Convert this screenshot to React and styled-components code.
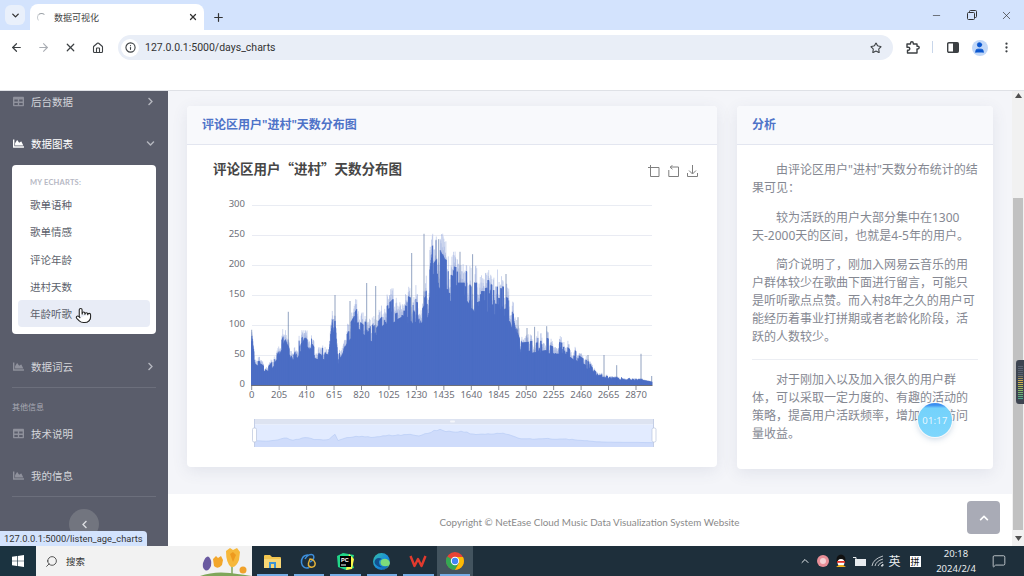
import React from "react";
import styled, { createGlobalStyle } from "styled-components";
import {
  ArrowLeft,
  ArrowRight,
  ChevronDown,
  ChevronUp,
  EllipsisVertical,
  House,
  Info,
  Minus,
  MessageSquare,
  Plus,
  Pointer,
  Search,
  Star,
  User,
  X,
} from "lucide-react";
import {
  FaChartArea,
  FaChevronDown,
  FaChevronLeft,
  FaChevronRight,
  FaChevronUp,
  FaTable,
} from "react-icons/fa";

const SANS = `"Noto Sans", "Noto Sans CJK SC", sans-serif`;
const BAR = "#4a6cc4";

const GlobalStyle = createGlobalStyle`
  html, body { margin: 0; padding: 0; background: #fff; overflow: hidden; }
  * { box-sizing: border-box; }
  body { font-family: ${SANS}; }
`;

const Screen = styled.div`
  width: 1024px;
  height: 576px;
  display: flex;
  flex-direction: column;
  overflow: hidden;
`;

/* browser chrome */
const TabStrip = styled.div`
  height: 30px;
  flex: none;
  background: #d3e3fd;
  display: flex;
  align-items: flex-end;
  padding-left: 5px;
`;
const TabList = styled.div`
  width: 20px;
  height: 20px;
  margin-bottom: 5px;
  border-radius: 6px;
  background: #e9f0fb;
  display: flex;
  align-items: center;
  justify-content: center;
  color: #333;
`;
const Tab = styled.div`
  width: 174px;
  height: 26px;
  margin-left: 5px;
  padding: 0 6px 0 7px;
  background: #fff;
  border-radius: 8px 8px 0 0;
  display: flex;
  align-items: center;
  color: #444;
  font-size: 9px;
`;
const Spinner = styled.span`
  width: 9px;
  height: 9px;
  margin-right: 8px;
  border-radius: 50%;
  border: 1px solid transparent;
  border-top-color: #9aa0a6;
  border-left-color: #c6cacf;
  flex: none;
`;
const TabTitle = styled.span`
  flex: 1;
`;
const NewTab = styled.div`
  width: 28px;
  height: 25px;
  color: #333;
  display: flex;
  align-items: center;
  justify-content: center;
`;
const WindowButtons = styled.div`
  margin-left: auto;
  height: 30px;
  display: flex;
  color: #333;
`;
const WindowButton = styled.div`
  width: 35px;
  display: flex;
  align-items: center;
  justify-content: center;
`;

const Toolbar = styled.div`
  height: 30px;
  flex: none;
  background: #fff;
  border-radius: 8px 8px 0 0;
  display: flex;
  align-items: flex-start;
  padding: 5px 0 0 3px;
`;
const ToolCell = styled.div`
  width: 27px;
  height: 25px;
  flex: none;
  display: flex;
  align-items: center;
  justify-content: center;
  color: ${(p) => (p.$dim ? "#a9adb3" : "#3c4043")};
`;
const UrlBar = styled.div`
  width: 775px;
  height: 25px;
  margin: 0 6px 0 7px;
  border-radius: 13px;
  background: #e9eef7;
  display: flex;
  align-items: center;
  padding: 0 11px 0 3px;
  color: #3c4043;
  flex: none;
`;
const InfoDot = styled.div`
  width: 18px;
  height: 18px;
  border-radius: 50%;
  background: #fff;
  display: flex;
  align-items: center;
  justify-content: center;
  margin-right: 6px;
`;
const UrlText = styled.span`
  flex: 1;
  font-family: "Roboto", sans-serif;
  font-size: 10.5px;
  color: #333;
`;
const ToolDivider = styled.div`
  width: 1px;
  height: 12px;
  margin: 6px;
  background: #c8d6ea;
`;
const Avatar = styled.div`
  width: 16px;
  height: 16px;
  border-radius: 50%;
  background: #c2d8f8;
  color: #0b57d0;
  display: flex;
  align-items: center;
  justify-content: center;
  overflow: hidden;
`;

const SiteHeader = styled.div`
  height: 31px;
  flex: none;
  background: #fff;
  border-bottom: 1px solid #dfe1e6;
`;

/* page */
const PageRow = styled.div`
  position: relative;
  flex: 1;
  min-height: 0;
  display: flex;
`;
const Sidebar = styled.nav`
  width: 168px;
  flex: none;
  background: #5a5d6b;
  overflow: hidden;
  padding: 0 12px;
`;
const NavRow = styled.div`
  height: 42px;
  display: flex;
  align-items: center;
  font-size: 10.5px;
  color: ${(p) => (p.$active ? "#fff" : "#d4d5da")};
  margin-top: ${(p) => (p.$first ? "-11px" : "0")};
`;
const NavIcon = styled.span`
  width: 18px;
  margin-left: 1px;
  display: flex;
  color: ${(p) => (p.$active ? "#fff" : "#8f919c")};
  flex: none;
`;
const NavLabel = styled.span`
  flex: 1;
`;
const NavArrow = styled.span`
  width: 10px;
  margin-right: 1px;
  display: flex;
  justify-content: center;
  color: #b4b6be;
`;
const SubMenu = styled.div`
  height: 169px;
  margin: 1px 0 11px;
  background: #fff;
  border-radius: 4px;
  padding: 12px 6px 0;
`;
const SubHeading = styled.div`
  height: 12px;
  padding-left: 12px;
  font-family: "Lato", sans-serif;
  font-weight: 700;
  font-size: 7.5px;
  line-height: 12px;
  color: #b6b8c4;
  margin-bottom: 2px;
  letter-spacing: 0.2px;
`;
const SubItem = styled.div`
  position: relative;
  height: 27.25px;
  padding-left: 12px;
  display: flex;
  align-items: center;
  font-size: 10.5px;
  color: #5c5f6b;
  border-radius: 4px;
  background: ${(p) => (p.$hover ? "#e8ecf6" : "transparent")};
`;
const Cursor = styled.span`
  position: absolute;
  left: 57px;
  top: 7px;
  color: #222;
  display: flex;
`;
const NavDivider = styled.div`
  height: 1px;
  background: #6c6f7c;
`;
const NavGroup = styled.div`
  height: 24px;
  padding-top: 13px;
  font-size: 8px;
  line-height: 11px;
  color: #a8aab4;
`;
const Collapse = styled.div`
  width: 30px;
  height: 30px;
  margin: 12px auto 0;
  border-radius: 50%;
  background: #72757f;
  color: #dcdde1;
  display: flex;
  align-items: center;
  justify-content: center;
`;

const Main = styled.main`
  flex: 1;
  min-width: 0;
  display: flex;
  flex-direction: column;
`;
const Content = styled.div`
  height: 403px;
  flex: none;
  background: #f4f5f9;
  padding: 15px 19px 0;
  display: flex;
  align-items: flex-start;
  gap: 20px;
`;
const Card = styled.section`
  width: ${(p) => p.$w}px;
  height: ${(p) => p.$h}px;
  flex: none;
  background: #fff;
  border-radius: 4px;
  box-shadow: 0 4px 16px rgba(70, 80, 120, 0.1);
  overflow: hidden;
`;
const CardHead = styled.header`
  height: 39px;
  background: #f8f9fc;
  border-bottom: 1px solid #e3e6f0;
  padding: 0 0 2px 15px;
  display: flex;
  align-items: center;
  font-size: 12px;
  font-weight: 600;
  color: #4e73c8;
`;
const ChartHead = styled.div`
  height: 50px;
  display: flex;
  align-items: center;
  padding: 1px 19px 0 26px;
`;
const ChartTitle = styled.h2`
  margin: 0 0 3px;
  flex: 1;
  font-family: "Noto Sans CJK SC", sans-serif;
  font-size: 13.5px;
  line-height: 1;
  font-weight: 700;
  color: #464646;
`;
const ChartTools = styled.div`
  display: flex;
  gap: 8px;
  color: #7f7f7f;
`;
const ChartSvg = styled.svg`
  display: block;
  width: 530px;
  height: 272px;
`;
const Analysis = styled.div`
  padding: 16px 15px 0;
  font-size: 12px;
  line-height: 18px;
  color: #858892;
`;
const Para = styled.p`
  margin: 0 0 11.5px;
  text-indent: 24px;
`;
const Rule = styled.hr`
  margin: 13px 0 11px;
  border: none;
  height: 1px;
  background: #eceef3;
`;

const Footer = styled.footer`
  flex: 1;
  background: #fff;
  padding: 7px 12px 0 0;
  display: flex;
  align-items: center;
`;
const Copyright = styled.div`
  flex: 1;
  text-align: center;
  font-family: "Lato", sans-serif;
  font-size: 9.85px;
  color: #8a8a8a;
  margin: 0 -44px 4px 0;
`;
const ToTop = styled.div`
  width: 33px;
  height: 33px;
  margin-bottom: 12px;
  border-radius: 4px;
  background: #a9abb6;
  color: #fff;
  display: flex;
  align-items: center;
  justify-content: center;
`;

const Scrollbar = styled.div`
  width: 12px;
  flex: none;
  background: #f1f1f1;
  display: flex;
  flex-direction: column;
  align-items: center;
  padding-top: 2px;
  color: #505050;
`;
const Thumb = styled.div`
  width: 10px;
  height: 332px;
  margin: 100px 0 6px;
  background: #c1c1c1;
`;
const RecMeter = styled.div`
  position: absolute;
  right: 0;
  top: 269px;
  width: 8px;
  height: 44px;
  border-radius: 3px 0 0 3px;
  background: #3d4450;
  padding: 6px 1px 4px 2px;
`;
const RecBars = styled.div`
  height: 100%;
  background: repeating-linear-gradient(
      to bottom,
      transparent 0 1px,
      #3d4450 1px 2px
    ),
    linear-gradient(to bottom, #5b6472 0 25%, #d8b44a 45%, #8dbb62 70%, #3fa98f 100%);
`;
const TimerBubble = styled.div`
  position: absolute;
  left: 918px;
  top: 312px;
  width: 34px;
  height: 34px;
  border-radius: 50%;
  background: linear-gradient(to bottom, #3b8ff0 0 6%, #74d2fb 15%, #7ed6fc 100%);
  box-shadow: 0 0 0 1px rgba(255, 255, 255, 0.75), 0 2px 6px rgba(90, 130, 170, 0.35);
  color: rgba(255, 255, 255, 0.85);
  font-size: 9.5px;
  letter-spacing: 0.2px;
  display: flex;
  align-items: center;
  justify-content: center;
`;
const LinkTip = styled.div`
  position: absolute;
  left: 0;
  bottom: 0;
  width: 147px;
  height: 15px;
  padding-left: 4px;
  background: #d3e3fd;
  border-radius: 0 4px 0 0;
  font-family: "Roboto", sans-serif;
  font-size: 9.35px;
  line-height: 15px;
  color: #333;
  white-space: nowrap;
`;

/* windows taskbar */
const Taskbar = styled.div`
  height: 30px;
  flex: none;
  background: #1e2f3b;
  display: flex;
  align-items: stretch;
`;
const StartButton = styled.div`
  width: 36px;
  display: flex;
  align-items: center;
  justify-content: center;
  background: #1b3340;
`;
const SearchBox = styled.div`
  width: 216px;
  margin-right: 2px;
  background: #f2f2f2;
  display: flex;
  align-items: center;
  padding-left: 9px;
  color: #333;
  font-size: 9.5px;
  overflow: hidden;
`;
const SearchGlass = styled(Search)`
  transform: scaleX(-1);
`;
const SearchLabel = styled.span`
  margin-left: 8px;
  flex: 1;
`;
const AppCell = styled.div`
  position: relative;
  width: 36.5px;
  display: flex;
  align-items: center;
  justify-content: center;
  background: ${(p) => (p.$active ? "#43545f" : "transparent")};
  &::after {
    content: "";
    position: absolute;
    left: 3px;
    right: 3px;
    bottom: 0;
    height: 2px;
    background: #76aee6;
  }
`;
const Tray = styled.div`
  margin-left: auto;
  display: flex;
  color: #e8ecef;
`;
const TrayCell = styled.div`
  width: ${(p) => p.$w}px;
  display: flex;
  align-items: center;
  justify-content: center;
  font-size: ${(p) => (p.$big ? 12 : 9.5)}px;
`;
const ImeBox = styled.span`
  width: 11px;
  height: 11px;
  background: #fff;
  color: #111;
  font-size: 9px;
  line-height: 11px;
  text-align: center;
`;
const Clock = styled.div`
  width: 58px;
  display: flex;
  flex-direction: column;
  align-items: center;
  justify-content: center;
  font-size: 9.5px;
  line-height: 15px;
  color: #e8ecef;
`;

/* chart data, read off the picture in screen pixels */
const ENVELOPE = [
  [251, 92], [255, 47], [268, 28], [277, 55], [285, 92], [293, 47], [305, 95],
  [315, 65], [328, 55], [335, 145], [338, 47], [348, 95], [358, 125], [372, 100],
  [385, 130], [402, 150], [418, 135], [428, 167], [432, 220], [438, 235], [445, 205],
  [455, 195], [465, 195], [475, 165], [490, 170], [500, 165], [510, 155], [516, 100],
  [522, 70], [530, 72], [546, 78], [556, 70], [567, 70], [578, 50], [588, 38],
  [597, 20], [610, 14], [625, 12], [640, 10], [652, 6],
];
const SPIKES = [
  [251.7, 92], [288.3, 122], [335, 150], [350, 140], [366.7, 170], [375.7, 165],
  [411.7, 220], [424, 252], [436, 242], [438.7, 243], [460, 222], [472.6, 218],
  [506, 185], [518, 113], [527, 95], [534.6, 97], [546.7, 98], [588, 50], [604, 50],
  [616.7, 33], [641, 52], [651.7, 15],
];
const BASE = 385;
const toY = (v) => BASE - (v * 180) / 300;

const envelopeAt = (x) => {
  for (let i = 1; i < ENVELOPE.length; i++) {
    const [x0, v0] = ENVELOPE[i - 1];
    const [x1, v1] = ENVELOPE[i];
    if (x <= x1) return v0 + ((v1 - v0) * (x - x0)) / (x1 - x0);
  }
  return 6;
};

let seed = 11;
const rand = () => {
  seed = (seed * 16807) % 2147483647;
  return seed / 2147483647;
};

const makeBars = () => {
  let body = "";
  let soft = "";
  let jag = 0.9;
  for (let x = 251.5; x <= 652; x += 0.4) {
    const v = envelopeAt(x);
    // hold a level for a couple of pixels so the outline looks jagged
    if (rand() < 0.3) jag = 0.68 + 0.37 * rand();
    body += `M${x.toFixed(1)} ${BASE}V${toY(v * jag).toFixed(1)}`;
    soft += `M${x.toFixed(1)} ${BASE}V${toY(v * (jag + 0.18 * rand())).toFixed(1)}`;
  }
  const spikes = SPIKES.map(([x, v]) => `M${x} ${BASE}V${toY(v)}`).join("");
  return { body, soft, spikes };
};
const BARS = makeBars();

const miniY = (v) => 443 - v * 0.058;
const makeMini = () => {
  const pts = [];
  for (let x = 254; x <= 653; x += 3) {
    const wob = 0.86 + 0.2 * rand();
    pts.push(`${x} ${miniY(envelopeAt(x) * wob).toFixed(1)}`);
  }
  const line = `M${pts.join("L")}`;
  return { line, area: `${line}L653 447L254 447Z` };
};
const MINI = makeMini();

const Y_TICKS = [0, 50, 100, 150, 200, 250, 300];
const X_TICKS = Array.from({ length: 15 }, (_, i) => i * 205);
const tickX = (i) => 251.7 + i * 27.45;

const CropIcon = () => (
  <svg width="12" height="12" viewBox="0 0 12 12" fill="none" stroke="currentColor" strokeWidth="1">
    <path d="M0 2.5H11V11.5H2.5V0" />
  </svg>
);
const RestoreIcon = () => (
  <svg width="11" height="12" viewBox="0 0 11 12" fill="none" stroke="currentColor" strokeWidth="1">
    <path d="M3 2H10.5V11.5H.8V5" />
    <path d="M4.5 .3L2 2.2L4.5 4.2" />
  </svg>
);
const SaveIcon = () => (
  <svg width="11" height="12" viewBox="0 0 11 12" fill="none" stroke="currentColor" strokeWidth="1">
    <path d="M.5 8V11.5H10.5V8" />
    <path d="M5.5 0V8.5M2 5.5L5.5 9L9 5.5" />
  </svg>
);

const Chart = () => (
  <ChartSvg viewBox="187 195 530 272" fontFamily={SANS}>
    {Y_TICKS.filter((v) => v > 0).map((v) => (
      <line key={v} x1="252" x2="652" y1={toY(v) + 0.5} y2={toY(v) + 0.5} stroke="#e9ecf3" />
    ))}
    {Y_TICKS.map((v) => (
      <text key={v} x="245" y={toY(v) + 2} fontSize="9.5" textAnchor="end" fill="#6e7079">
        {v}
      </text>
    ))}
    <path d={BARS.spikes} stroke="#55709f" strokeWidth="0.8" opacity="0.8" />
    <path d={BARS.soft} stroke={BAR} strokeWidth="0.5" opacity="0.55" />
    <path d={BARS.body} stroke={BAR} strokeWidth="0.9" />
    <line x1="251" x2="652.5" y1="385.5" y2="385.5" stroke="#6e7079" />
    {X_TICKS.map((v, i) => (
      <g key={v}>
        <line x1={tickX(i)} x2={tickX(i)} y1="385" y2="390" stroke="#6e7079" strokeWidth="0.8" />
        <text x={tickX(i)} y="397.5" fontSize="9.5" textAnchor="middle" fill="#6e7079">
          {v}
        </text>
      </g>
    ))}
    <rect x="254" y="419" width="400" height="5.5" fill="#dde3f1" />
    <rect x="254" y="424.5" width="400" height="22.5" fill="#e2ebff" />
    <path d={MINI.area} fill="#cfdcfb" />
    <path d={MINI.line} fill="none" stroke="#bccff6" strokeWidth="0.8" />
    <line x1="254.5" x2="254.5" y1="419" y2="447" stroke="#c4cee6" />
    <line x1="653.5" x2="653.5" y1="419" y2="447" stroke="#c4cee6" />
    <rect x="252.5" y="428" width="4" height="14" rx="1.5" fill="#fff" stroke="#b9c4dc" strokeWidth="0.7" />
    <rect x="652" y="428" width="4" height="14" rx="1.5" fill="#fff" stroke="#b9c4dc" strokeWidth="0.7" />
    <rect x="450" y="420.5" width="5" height="2" rx="1" fill="#f3f5fa" />
  </ChartSvg>
);

const PuzzleIcon = () => (
  <svg width="14" height="13" viewBox="0 0 14 13" fill="none" stroke="#3c4043" strokeWidth="1.4" strokeLinejoin="round">
    <path d="M1 3H4.5V2.2A1.4 1.4 0 0 1 7.3 2.2V3H11V5.2H11.8A1.4 1.4 0 0 1 11.8 8H11V12H1.5V9.2H2.3A1.4 1.4 0 0 0 2.3 6.2H1Z" />
  </svg>
);
const SidePanelIcon = () => (
  <svg width="12" height="11" viewBox="0 0 12 11">
    <rect x="0.7" y="0.7" width="10.6" height="9.6" rx="1.2" fill="#fff" stroke="#3c4043" strokeWidth="1.4" />
    <rect x="6" y="0.7" width="5.3" height="9.6" fill="#3c4043" />
  </svg>
);
const RestoreWindowIcon = () => (
  <svg width="10" height="10" viewBox="0 0 10 10" fill="none" stroke="currentColor" strokeWidth="1">
    <rect x="0.5" y="2.5" width="7" height="7" rx="1" />
    <path d="M2.5 2.5V1.5Q2.5 .5 3.5 .5H8.5Q9.5 .5 9.5 1.5V6.5Q9.5 7.5 8.5 7.5H7.5" />
  </svg>
);
const WindowsLogo = () => (
  <svg width="12" height="12" viewBox="0 0 12 12" fill="#fff">
    <path d="M0 1.7L5 1V5.7H0ZM5.7 .9L12 0V5.7H5.7ZM0 6.3H5V11L0 10.3ZM5.7 6.3H12V12L5.7 11.1Z" />
  </svg>
);
const Flowers = () => (
  <svg width="52" height="30" viewBox="0 0 52 30">
    <path d="M0 30Q14 25 30 27T52 30Z" fill="#7fa65a" />
    <path d="M3 17Q6 9 9 11Q12 14 11 20Q8 26 5 24Q2 22 3 17Z" fill="#6a5aa0" />
    <path d="M13 13L16 10L18 12L21 10L23 14L22 19Q18 24 14 20Z" fill="#f2a62b" />
    <path d="M26 5L30 2L33 4L37 2L40 6L39 14Q36 22 31 21Q26 17 26 5Z" fill="#f6b83a" />
    <path d="M30 8L33 6L36 9L33 16Z" fill="#ee9a1f" />
    <path d="M32 21V28" stroke="#7fa65a" strokeWidth="1.5" />
    <circle cx="43" cy="24" r="3.5" fill="#f0a22c" />
  </svg>
);
const FolderApp = () => (
  <svg width="17" height="15" viewBox="0 0 17 15">
    <path d="M0 2Q0 1 1 1H6L8 3H16Q17 3 17 4V14H0Z" fill="#f3c64f" />
    <rect x="0" y="5" width="17" height="9" fill="#f8d775" />
    <rect x="5" y="8" width="7" height="6" fill="#3d95d6" />
    <rect x="7" y="10" width="3" height="4" fill="#f8d775" />
  </svg>
);
const RingsApp = () => (
  <svg width="17" height="17" viewBox="0 0 17 17" fill="none" strokeWidth="1.5">
    <path d="M8 2C3 2 1 6 1.5 10C2 14 6 16 9 14.5" stroke="#3d8fdc" />
    <path d="M5 6C7 2 11 .5 13 2C15 4 13 8 10 9" stroke="#3d8fdc" />
    <path d="M10 6C13 6 16 9 15 12C14 15 10 15 8.5 12.5C8 10 9 8 10 6Z" stroke="#e4b33a" />
  </svg>
);
const PyCharmApp = () => (
  <svg width="17" height="17" viewBox="0 0 17 17">
    <path d="M0 3L6 0L17 2L15 9L17 15L9 17L1 14Z" fill="#21d789" />
    <path d="M12 1L17 6L15 16L9 17Z" fill="#fcf84a" />
    <rect x="3" y="3" width="11" height="11" fill="#000" />
    <text x="4" y="9" fontSize="5.5" fontWeight="700" fill="#fff" fontFamily="Liberation Sans, sans-serif">PC</text>
    <rect x="4" y="11.5" width="5" height="1" fill="#fff" />
  </svg>
);
const EdgeApp = () => (
  <svg width="17" height="17" viewBox="0 0 17 17">
    <defs>
      <linearGradient id="edgeFill" x1="0" y1="0" x2="1" y2="1">
        <stop offset="0" stopColor="#35c1a5" />
        <stop offset="0.55" stopColor="#1a8ddb" />
        <stop offset="1" stopColor="#0f5ea8" />
      </linearGradient>
    </defs>
    <circle cx="8.5" cy="8.5" r="8.5" fill="url(#edgeFill)" />
    <path d="M17 10C16 6 12 5 9 6.5C7 8 7 11 9 12.5C11 13.5 14 13.3 15.5 12.5C14 15.5 11 17 8.5 17C11 17 16 15 17 10Z" fill="#7ddc7a" />
    <path d="M6 9C6 12 8 14 11 14C7 15 2 13 1.5 9C2 5 6 4 9 6C7 6.5 6 7.5 6 9Z" fill="#12518f" />
  </svg>
);
const WpsApp = () => (
  <svg width="18" height="14" viewBox="0 0 18 14" fill="none" stroke="#e23a2e" strokeWidth="2.4" strokeLinejoin="round">
    <path d="M1.5 2L5.5 12L9 5L12.5 12L16.5 2" />
  </svg>
);
const ChromeApp = () => (
  <svg width="18" height="18" viewBox="0 0 18 18">
    <circle cx="9" cy="9" r="9" fill="#ea4335" />
    <path d="M9 9L1.2 4.5A9 9 0 0 0 9 18L13 11Z" fill="#34a853" />
    <path d="M9 5H17A9 9 0 0 1 9 18L13 11Z" fill="#fbbc04" />
    <circle cx="9" cy="9" r="4.2" fill="#fff" />
    <circle cx="9" cy="9" r="3.2" fill="#4285f4" />
  </svg>
);
const SakuraTray = () => (
  <svg width="12" height="12" viewBox="0 0 12 12">
    <circle cx="6" cy="6" r="6" fill="#e98f98" />
    <circle cx="6" cy="6" r="3" fill="#f6d3d6" />
  </svg>
);
const QqTray = () => (
  <svg width="12" height="14" viewBox="0 0 12 14">
    <ellipse cx="6" cy="6" rx="4.5" ry="5.5" fill="#111" />
    <ellipse cx="6" cy="8.5" rx="3.5" ry="3.5" fill="#fff" />
    <rect x="2" y="7" width="8" height="1.8" fill="#e3352b" />
    <path d="M1 13L4 11H8L11 13Z" fill="#f2b01e" />
  </svg>
);
const BatteryTray = () => (
  <svg width="15" height="11" viewBox="0 0 15 11" fill="none" stroke="#e8ecef">
    <rect x="3.5" y="3.5" width="10" height="6" fill="#e8ecef" />
    <path d="M1 1.5H4V4" />
  </svg>
);
const WifiTray = () => (
  <svg width="13" height="12" viewBox="0 0 13 12" fill="none" stroke="#cfd4d8" strokeWidth="0.9">
    <path d="M1 11Q2 4 12 1M4 11Q5 6 12 4M7 11Q8 8 12 7" />
    <path d="M10 11L12 9V11Z" fill="#cfd4d8" />
  </svg>
);

const SUB_ITEMS = ["歌单语种", "歌单情感", "评论年龄", "进村天数", "年龄听歌"];
const TRAY = [
  [18, <ChevronUp key="up" size={12} />],
  [17, <SakuraTray key="s" />],
  [19, <QqTray key="q" />],
  [19, <BatteryTray key="b" />],
  [17, <WifiTray key="w" />],
];
const APPS = [
  <FolderApp key="f" />,
  <RingsApp key="r" />,
  <PyCharmApp key="p" />,
  <EdgeApp key="e" />,
  <WpsApp key="w" />,
];

const App = () => {
  return (
    <Screen>
      <GlobalStyle />
      <TabStrip>
        <TabList>
          <ChevronDown size={11} strokeWidth={3} />
        </TabList>
        <Tab>
          <Spinner />
          <TabTitle>数据可视化</TabTitle>
          <X size={10} strokeWidth={3} color="#333" />
        </Tab>
        <NewTab>
          <Plus size={13} strokeWidth={2.2} />
        </NewTab>
        <WindowButtons>
          <WindowButton>
            <Minus size={11} strokeWidth={1.4} />
          </WindowButton>
          <WindowButton>
            <RestoreWindowIcon />
          </WindowButton>
          <WindowButton>
            <X size={13} strokeWidth={1.3} />
          </WindowButton>
        </WindowButtons>
      </TabStrip>

      <Toolbar>
        <ToolCell>
          <ArrowLeft size={13} strokeWidth={2.2} />
        </ToolCell>
        <ToolCell $dim>
          <ArrowRight size={13} strokeWidth={2} />
        </ToolCell>
        <ToolCell>
          <X size={13} strokeWidth={2.2} />
        </ToolCell>
        <ToolCell>
          <House size={12} strokeWidth={2.2} />
        </ToolCell>
        <UrlBar>
          <InfoDot>
            <Info size={11} strokeWidth={2.4} />
          </InfoDot>
          <UrlText>127.0.0.1:5000/days_charts</UrlText>
          <Star size={12} strokeWidth={2.2} />
        </UrlBar>
        <ToolCell>
          <PuzzleIcon />
        </ToolCell>
        <ToolDivider />
        <ToolCell>
          <SidePanelIcon />
        </ToolCell>
        <ToolCell>
          <Avatar>
            <User size={13} fill="#0b57d0" strokeWidth={1.5} />
          </Avatar>
        </ToolCell>
        <ToolCell>
          <EllipsisVertical size={13} strokeWidth={2.2} />
        </ToolCell>
      </Toolbar>

      <SiteHeader />

      <PageRow>
        <Sidebar>
          <NavRow $first>
            <NavIcon><FaTable size={11} /></NavIcon>
            <NavLabel>后台数据</NavLabel>
            <NavArrow><FaChevronRight size={9} /></NavArrow>
          </NavRow>
          <NavRow $active>
            <NavIcon $active><FaChartArea size={11} /></NavIcon>
            <NavLabel>数据图表</NavLabel>
            <NavArrow><FaChevronDown size={9} /></NavArrow>
          </NavRow>
          <SubMenu>
            <SubHeading>MY ECHARTS:</SubHeading>
            {SUB_ITEMS.map((item) => (
              <SubItem key={item} $hover={item === "年龄听歌"}>
                {item}
                {item === "年龄听歌" && (
                  <Cursor>
                    <Pointer size={17} strokeWidth={1.5} fill="#fff" />
                  </Cursor>
                )}
              </SubItem>
            ))}
          </SubMenu>
          <NavRow>
            <NavIcon><FaChartArea size={11} /></NavIcon>
            <NavLabel>数据词云</NavLabel>
            <NavArrow><FaChevronRight size={9} /></NavArrow>
          </NavRow>
          <NavDivider />
          <NavGroup>其他信息</NavGroup>
          <NavRow>
            <NavIcon><FaTable size={11} /></NavIcon>
            <NavLabel>技术说明</NavLabel>
          </NavRow>
          <NavRow>
            <NavIcon><FaChartArea size={11} /></NavIcon>
            <NavLabel>我的信息</NavLabel>
          </NavRow>
          <NavDivider />
          <Collapse>
            <FaChevronLeft size={9} />
          </Collapse>
        </Sidebar>

        <Main>
          <Content>
            <Card $w={530} $h={361}>
              <CardHead>评论区用户"进村"天数分布图</CardHead>
              <ChartHead>
                <ChartTitle>评论区用户“进村”天数分布图</ChartTitle>
                <ChartTools>
                  <CropIcon />
                  <RestoreIcon />
                  <SaveIcon />
                </ChartTools>
              </ChartHead>
              <Chart />
            </Card>
            <Card $w={256} $h={363}>
              <CardHead>分析</CardHead>
              <Analysis>
                <Para>由评论区用户"进村"天数分布统计的结果可见：</Para>
                <Para>较为活跃的用户大部分集中在1300天-2000天的区间，也就是4-5年的用户。</Para>
                <Para>简介说明了，刚加入网易云音乐的用户群体较少在歌曲下面进行留言，可能只是听听歌点点赞。而入村8年之久的用户可能经历着事业打拼期或者老龄化阶段，活跃的人数较少。</Para>
                <Rule />
                <Para>对于刚加入以及加入很久的用户群体，可以采取一定力度的、有趣的活动的策略，提高用户活跃频率，增加音乐访问量收益。</Para>
              </Analysis>
            </Card>
          </Content>
          <Footer>
            <Copyright>Copyright © NetEase Cloud Music Data Visualization System Website</Copyright>
            <ToTop>
              <FaChevronUp size={10} />
            </ToTop>
          </Footer>
        </Main>

        <Scrollbar>
          <svg width="7" height="5" viewBox="0 0 7 5" fill="currentColor"><path d="M3.5 0L7 5H0Z" /></svg>
          <Thumb />
          <svg width="7" height="5" viewBox="0 0 7 5" fill="currentColor"><path d="M0 0H7L3.5 5Z" /></svg>
        </Scrollbar>

        <RecMeter>
          <RecBars />
        </RecMeter>
        <TimerBubble>01:17</TimerBubble>
        <LinkTip>127.0.0.1:5000/listen_age_charts</LinkTip>
      </PageRow>

      <Taskbar>
        <StartButton>
          <WindowsLogo />
        </StartButton>
        <SearchBox>
          <SearchGlass size={13} strokeWidth={1.5} />
          <SearchLabel>搜索</SearchLabel>
          <Flowers />
        </SearchBox>
        {APPS.map((app, i) => (
          <AppCell key={i}>{app}</AppCell>
        ))}
        <AppCell $active>
          <ChromeApp />
        </AppCell>
        <Tray>
          {TRAY.map(([w, icon], i) => (
            <TrayCell key={i} $w={w}>{icon}</TrayCell>
          ))}
          <TrayCell $w={17} $big>英</TrayCell>
          <TrayCell $w={24}>
            <ImeBox>拼</ImeBox>
          </TrayCell>
          <Clock>
            <span>20:18</span>
            <span>2024/2/4</span>
          </Clock>
          <TrayCell $w={28}>
            <MessageSquare size={14} strokeWidth={1.3} />
          </TrayCell>
          <TrayCell $w={11} />
        </Tray>
      </Taskbar>
    </Screen>
  );
};

export default App;
